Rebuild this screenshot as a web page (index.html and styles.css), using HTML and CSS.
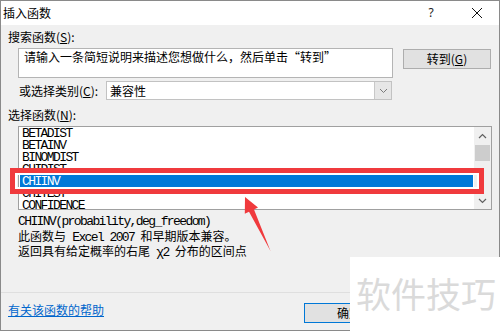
FILE: index.html
```html
<!DOCTYPE html>
<html lang="zh-CN">
<head>
<meta charset="utf-8">
<title>插入函数</title>
<link rel="stylesheet" href="styles.css">
</head>
<body>
<div class="window">
  <div class="titlebar">
    <span class="title">插入函数</span>
    <span class="help">?</span>
    <span class="close"><svg width="12" height="12" viewBox="0 0 12 12"><path d="M1 1L11 11M11 1L1 11" stroke="#111" stroke-width="1" fill="none"/></svg></span>
  </div>
  <div class="content">
    <div class="label">搜索函数(<u>S</u>):</div>
    <div class="search-row">
      <div class="textbox">请输入一条简短说明来描述您想做什么，然后单击“转到”</div>
      <button class="btn go">转到(<u>G</u>)</button>
    </div>
    <div class="cat-row">
      <span class="cat-label">或选择类别(<u>C</u>):</span>
      <div class="combo">
        <span class="combo-text">兼容性</span>
        <span class="drop"><svg width="9" height="6" viewBox="0 0 9 6"><path d="M1 1L4.5 4.5L8 1" stroke="#7a7a7a" stroke-width="1" fill="none"/></svg></span>
      </div>
    </div>
    <div class="label fn-label">选择函数(<u>N</u>):</div>
    <div class="listbox">
      <div class="items">
        <div class="item">BETADIST</div>
        <div class="item">BETAINV</div>
        <div class="item">BINOMDIST</div>
        <div class="item">CHIDIST</div>
        <div class="item selected">CHIINV</div>
        <div class="item">CHITEST</div>
        <div class="item">CONFIDENCE</div>
      </div>
      <div class="scrollbar">
        <div class="sb-btn"><svg width="9" height="6" viewBox="0 0 9 6"><path d="M1 5L4.5 1.5L8 5" stroke="#606060" stroke-width="1.2" fill="none"/></svg></div>
        <div class="sb-thumb"></div>
        <div class="sb-track"></div>
        <div class="sb-btn"><svg width="9" height="6" viewBox="0 0 9 6"><path d="M1 1L4.5 4.5L8 1" stroke="#606060" stroke-width="1.2" fill="none"/></svg></div>
      </div>
    </div>
    <div class="desc">
      <div class="m">CHIINV(probability,deg_freedom)</div>
      <div>此函数与<span class="m"> Excel 2007 </span>和早期版本兼容。</div>
      <div>返回具有给定概率的右尾<span class="m"> χ2 </span>分布的区间点</div>
    </div>
    <div class="sep"></div>
    <div class="footer">
      <a class="help-link" href="#">有关该函数的帮助</a>
      <button class="btn ok">确定</button>
      <button class="btn cancel">取消</button>
    </div>
  </div>

  <div class="redbox"></div>
  <svg class="arrow" width="500" height="331" viewBox="0 0 500 331">
    <polygon points="245,197 258,207.5 254,209.5 270.5,251 249,211.8 244.8,213.8" fill="#f03a3d"/>
  </svg>
  <div class="watermark">软件技巧</div>
</div>
</body>
</html>
```

FILE: styles.css
```css
* { box-sizing: border-box; }
html, body { margin: 0; padding: 0; }
body {
  width: 500px;
  height: 331px;
  overflow: hidden;
  background: #f0f0f0;
  font-family: "Noto Sans CJK SC", "Noto Sans", sans-serif;
  font-size: 12px;
  color: #000;
}
u { text-decoration: underline; text-underline-offset: 1px; }

.window {
  position: relative;
  width: 500px;
  height: 331px;
  border: 1px solid #8a8a8a;
  background: #f0f0f0;
  display: flex;
  flex-direction: column;
}

.titlebar {
  height: 24px;
  background: #fff;
  display: flex;
  align-items: center;
  padding-left: 2px;
  padding-right: 12px;
  flex: none;
}
.title { flex: 1; line-height: 16px; }
.help {
  width: 20px;
  text-align: center;
  line-height: 16px;
  font-family: "Noto Sans", sans-serif;
  font-size: 12px;
  color: #222;
}
.close {
  width: 20px;
  margin-left: 26px;
  display: flex;
  justify-content: center;
}

.content {
  flex: 1;
  display: flex;
  flex-direction: column;
  padding: 4px 0 0 7px;
}
.label { line-height: 16px; }

.search-row {
  display: flex;
  align-items: flex-start;
  margin-top: 3px;
  padding-left: 10px;
}
.textbox {
  width: 375px;
  height: 30px;
  background: #fff;
  border: 1px solid #b4b4b4;
  padding: 0 5px;
  line-height: 16px;
}
.btn {
  font-family: "Noto Sans CJK SC", sans-serif;
  font-size: 12px;
  color: #000;
  background: #e1e1e1;
  border: 1px solid #adadad;
  padding: 0;
  height: 20px;
  line-height: 16px;
}
.go {
  width: 88px;
  margin-left: 10px;
  margin-top: 1px;
}

.cat-row {
  display: flex;
  align-items: center;
  margin-top: 3px;
  padding-left: 11px;
}
.cat-label { width: 87px; line-height: 16px; }
.combo {
  width: 286px;
  height: 19px;
  background: #fff;
  border: 1px solid #c2c2c2;
  display: flex;
  align-items: center;
}
.combo-text { flex: 1; padding-left: 3px; line-height: 16px; }
.drop {
  width: 17px;
  height: 17px;
  background: #e6e6e6;
  border-left: 1px solid #c8c8c8;
  display: flex;
  align-items: center;
  justify-content: center;
}

.fn-label { margin-top: 7px; }

.listbox {
  margin-top: 3px;
  margin-left: 10px;
  width: 474px;
  height: 84px;
  background: #fff;
  border: 1px solid #a0a0a0;
  display: flex;
  overflow: hidden;
}
.items { flex: 1; overflow: hidden; }
.item {
  font-family: "Liberation Mono", monospace;
  font-size: 13px;
  letter-spacing: -1.6px;
  line-height: 12px;
  height: 12px;
  padding: 1px 0 0 2px;
  margin: 0 1px;
  white-space: nowrap;
}
.item.selected {
  background: #0078d7;
  color: #fff;
}
.scrollbar {
  width: 17px;
  background: #f0f0f0;
  display: flex;
  flex-direction: column;
}
.sb-btn {
  height: 17px;
  display: flex;
  align-items: center;
  justify-content: center;
  flex: none;
}
.sb-thumb {
  height: 16px;
  margin: 1px 1px 0;
  background: #cdcdcd;
  flex: none;
}
.sb-track { flex: 1; }

.desc {
  margin-top: 5px;
  padding-left: 10px;
  line-height: 13.5px;
  white-space: nowrap;
}
.m {
  font-family: "Liberation Mono", monospace;
  font-size: 13px;
  letter-spacing: -1.6px;
}

.sep {
  margin-top: auto;
  margin-left: -7px;
  height: 1px;
  background: #dfdfdf;
}
.footer {
  height: 37px;
  display: flex;
  align-items: flex-start;
  padding-right: 7px;
}
.help-link {
  margin-top: 9px;
  line-height: 16px;
  color: #0066cc;
  text-decoration: underline;
}
.ok {
  margin-left: auto;
  margin-top: 10px;
  width: 90px;
  border-color: #0078d7;
}
.cancel {
  margin-left: 8px;
  margin-top: 10px;
  width: 90px;
}

.redbox {
  position: absolute;
  left: 9px;
  top: 167px;
  width: 474px;
  height: 26px;
  border: 5px solid #f03a3d;
  box-shadow: inset 0 0 0 2px #fff;
}
.arrow {
  position: absolute;
  left: -1px;
  top: -1px;
}
.watermark {
  position: absolute;
  left: 349px;
  top: 256px;
  width: 151px;
  height: 75px;
  background: #fff;
  color: #dadada;
  font-size: 35px;
  line-height: 72px;
  padding-left: 6px;
  white-space: nowrap;
}
```
